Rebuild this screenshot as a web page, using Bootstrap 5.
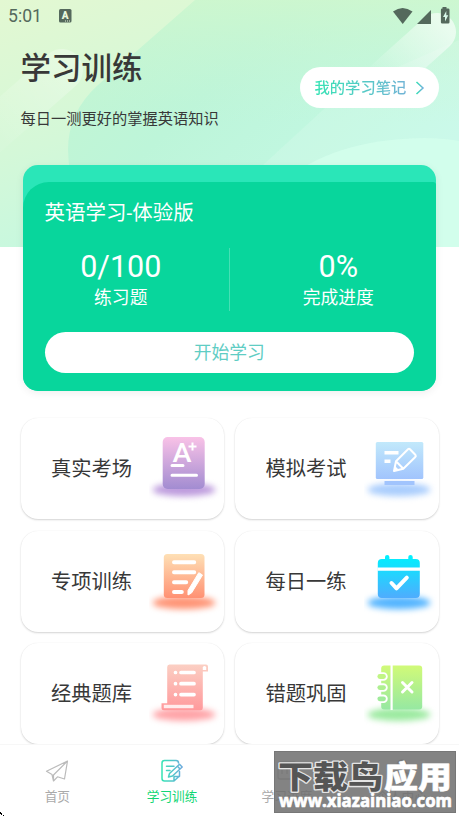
<!DOCTYPE html>
<html lang="zh-CN">
<head>
  <meta charset="UTF-8" />
  <meta name="viewport" content="width=device-width, initial-scale=1" />
  <title>学习训练</title>
  <link href="https://cdn.jsdelivr.net/npm/bootstrap@5.3.3/dist/css/bootstrap.min.css" rel="stylesheet" />
  <style>
    body {
      font-family: Roboto, "Noto Sans CJK SC", sans-serif;
      color: #383838;
      background: #fff;
      overflow: hidden;
    }
    svg { display: block; flex-shrink: 0; }
    .screen { width: 459px; height: 816px; }
    .hero-bg { top: 0; left: 0; z-index: -1; }
    .status-bar { height: 32px; padding: 0 9px 0 8px; color: #54695c; font-size: 17.6px; }
    .page-head { height: 132px; padding: 0 20.5px; }
    .page-title { font-size: 30.5px; line-height: 40px; font-weight: 500; margin: 17px 0 18px; }
    .page-sub { font-size: 15.25px; line-height: 24px; }
    .note-btn {
      width: 139px; height: 41px; margin-top: 35px; padding-left: 15px;
      font-size: 15.3px; font-weight: 500;
    }
    .note-btn span {
      padding-top: 2px;
      background: linear-gradient(90deg, #35e3b4, #72b4d6);
      -webkit-background-clip: text;
      color: transparent;
    }
    .study {
      height: 226px; margin: .5px 23px 0; padding-top: 17.5px;
      border-radius: 15px; background: #2ae6b8;
      box-shadow: 0 2px 9px rgba(0, 0, 0, .07);
      overflow: hidden;
    }
    .study-in {
      height: 209px; padding: 17px 21.5px 0;
      border-radius: 26px 3px 0 0; background: #08d69c;
    }
    .study-name { font-size: 20.5px; line-height: 28px; }
    .stats { height: 61px; margin-top: 21px; }
    .stats .col + .col { border-left: 1px solid rgba(255, 255, 255, .25); }
    .stats .col:first-child { padding-right: 32px; }
    .stats .col:last-child { padding-left: 32px; }
    .stat-num { font-size: 30.5px; line-height: 37px; }
    .stat-label { font-size: 17.8px; line-height: 26px; }
    .start-btn { height: 41px; margin: 23px .5px 0 0; padding-top: 2px; font-size: 17.8px; color: #5fcdc4; }
    .tiles { margin: 27.5px 20.5px 0; row-gap: 11.5px; column-gap: 11px; display: grid; grid-template-columns: 1fr 1fr; }
    .tile {
      height: 101px; padding: 0 1px 0 30.5px; border-radius: 17px; background: #fff;
      font-size: 20.3px;
      box-shadow: 0 1px 2px rgba(0, 0, 0, .17), 0 0 1px rgba(0, 0, 0, .08);
    }
    .tile span { padding-top: 2px; }
    .tab-bar { top: 744px; left: 0; height: 72px; border-top: 1px solid #f7f7f7; background: #fff; }
    .tab-item { font-size: 12.7px; line-height: 18px; color: #aaa; padding-top: 14px; }
    .tab-item.on { color: #14d675; }
    .tab-item svg { margin-bottom: 5px; }
    .stamp {
      top: 751px; left: 274px; width: 182px; height: 62px;
      background: rgba(111, 111, 111, .86); border: 1px solid #777;
    }
    .pointer { left: 0; top: 812px; }
  </style>
</head>
<body>
<div class="screen position-relative overflow-hidden">

  <svg class="hero-bg position-absolute" width="459" height="247" viewBox="0 0 459 247">
    <defs>
      <linearGradient id="base" x1="0" y1="0" x2="1" y2=".55"><stop offset=".2" stop-color="#c3f5d2"/><stop offset=".5" stop-color="#bdf5d9"/><stop offset="1" stop-color="#c4f9e7"/></linearGradient>
      <linearGradient id="topTint" x1="0" y1="0" x2="0" y2="1"><stop offset="0" stop-color="#d0f7cd" stop-opacity=".8"/><stop offset=".5" stop-color="#c4f5d6" stop-opacity="0"/></linearGradient>
      <linearGradient id="leaf" x1="0" y1="0" x2=".25" y2="1"><stop offset="0" stop-color="#e3f8d2"/><stop offset=".6" stop-color="#d4f8d8"/><stop offset="1" stop-color="#c7f8df"/></linearGradient>
      <linearGradient id="ray" gradientUnits="userSpaceOnUse" x1="445" y1="25" x2="375" y2="85"><stop offset="0" stop-color="#fff" stop-opacity=".6"/><stop offset="1" stop-color="#fff" stop-opacity="0"/></linearGradient>
      <linearGradient id="ray2" gradientUnits="userSpaceOnUse" x1="75" y1="55" x2="-10" y2="130"><stop offset="0" stop-color="#fff" stop-opacity=".3"/><stop offset="1" stop-color="#fff" stop-opacity=".05"/></linearGradient>
    </defs>
    <rect width="459" height="247" fill="url(#base)"/>
    <rect width="459" height="247" fill="url(#topTint)"/>
    <path d="M0 0H195L98 85Q68 112 68 150Q69 200 100 247H0Z" fill="url(#leaf)"/>
    <path d="M62 70L-20 142" stroke="url(#ray2)" stroke-width="42" stroke-linecap="round"/>
    <path d="M437 32L340 119" stroke="url(#ray)" stroke-width="38" stroke-linecap="round"/>
    <path d="M325 108L262 166V247H459V40L400 66Z" fill="#fff" opacity=".13"/>
    <path d="M280 185Q330 139 425 138Q443 138 459 141V247H280Z" fill="#d3feec" opacity=".88"/>
  </svg>

  <div class="status-bar d-flex align-items-center">
    <span>5:01</span>
    <svg class="ms-3" width="14" height="14" viewBox="0 0 14 14">
      <rect x="1" width="12.500" height="13.500" rx="1.500" fill="#54695c"/>
      <text x="7.200" y="10" text-anchor="middle" font-size="10" font-weight="900" fill="#e9f8dd">A</text>
      <path d="M7 12h1m1 0h1m1 0h1" stroke="#e9f8dd"/>
    </svg>
    <svg class="ms-auto" width="58" height="18" viewBox="0 0 58 18" fill="#54695c">
      <path d="M1 4.500Q10.500 -2.500 20.500 4.500L10.700 17Z"/>
      <path d="M39 3V17H25Z"/>
      <path d="M50.500 1.500V0h4v1.500h1.700q1.300 0 1.300 1.300v12.400q0 1.300-1.300 1.300h-6q-1.300 0-1.300-1.300V2.800q0-1.300 1.300-1.300Z"/>
      <path d="M54.300 4L51 10h2v4.500L56.300 8.300h-2Z" fill="#d8f8e9"/>
    </svg>
  </div>

  <div class="page-head d-flex justify-content-between">
    <div>
      <h1 class="page-title">学习训练</h1>
      <div class="page-sub">每日一测更好的掌握英语知识</div>
    </div>
    <div class="note-btn d-flex align-items-center bg-white rounded-pill">
      <span>我的学习笔记</span>
      <svg class="ms-2" width="12" height="16" viewBox="0 0 12 16" fill="none">
        <defs><linearGradient id="chev"><stop stop-color="#35dfb4"/><stop offset="1" stop-color="#72b0dc"/></linearGradient></defs>
        <path d="M2.500 2L9 8L2.500 14" stroke="url(#chev)" stroke-width="1.500"/>
      </svg>
    </div>
  </div>

  <div class="study text-white">
    <div class="study-in">
      <div class="study-name">英语学习-体验版</div>
      <div class="stats row g-0 text-center">
        <div class="col">
          <div class="stat-num">0/100</div>
          <div class="stat-label">练习题</div>
        </div>
        <div class="col">
          <div class="stat-num">0%</div>
          <div class="stat-label">完成进度</div>
        </div>
      </div>
      <div class="start-btn d-flex align-items-center justify-content-center bg-white rounded-pill">开始学习</div>
    </div>
  </div>

  <div class="tiles">
    <div class="tile d-flex align-items-center justify-content-between">
      <span>真实考场</span>
      <svg width="74" height="101" viewBox="0 0 74 101">
        <defs>
          <filter id="soft" x="-30%" y="-150%" width="160%" height="400%" color-interpolation-filters="sRGB"><feGaussianBlur stdDeviation="3"/></filter>
          <linearGradient id="g1" x2="0" y2="1"><stop stop-color="#f9c2e7"/><stop offset="1" stop-color="#a28cd1"/></linearGradient>
        </defs>
        <ellipse cx="35" cy="71.700" rx="31.500" ry="6.500" fill="#bd9bdd" filter="url(#soft)"/>
        <rect x="13.700" y="19" width="42" height="52" rx="5" fill="url(#g1)"/>
        <text x="33" y="43.500" text-anchor="middle" font-size="26" font-weight="500" textLength="19" lengthAdjust="spacingAndGlyphs" fill="#fff">A</text>
        <path d="M43.500 28.500m-4 0h8m-4-4v8" stroke="#fff" stroke-width="2"/>
        <path d="M23 47.500H34M23 57.300H47.500" stroke="#fff" stroke-width="3" stroke-linecap="round"/>
      </svg>
    </div>
    <div class="tile d-flex align-items-center justify-content-between">
      <span>模拟考试</span>
      <svg width="74" height="101" viewBox="0 0 74 101">
        <defs><linearGradient id="g2" x2="0" y2="1"><stop stop-color="#c2e9fb"/><stop offset="1" stop-color="#a1c4fd"/></linearGradient></defs>
        <ellipse cx="35" cy="71.700" rx="31.500" ry="6.500" fill="#a9cdfd" filter="url(#soft)"/>
        <rect x="11.800" y="24" width="47.500" height="37" rx="1.500" fill="url(#g2)"/>
        <rect x="20.500" y="63" width="30" height="4" fill="#a1c4fd"/>
        <path d="M20.500 34.700H34.500M20.500 43.200H26.500" stroke="#fff" stroke-width="3.600"/>
        <path d="M30 53L32 43.300L44 31.200Q45 30.200 46 31.200L51.500 37Q52.300 38 51.300 39L39.300 50.800ZM32 43.300L39.300 50.800" fill="none" stroke="#fff" stroke-width="2" stroke-linejoin="round"/>
        <path d="M30 53l1-5 4 4Z" fill="#fff"/>
      </svg>
    </div>
    <div class="tile d-flex align-items-center justify-content-between">
      <span>专项训练</span>
      <svg width="74" height="101" viewBox="0 0 74 101">
        <defs><linearGradient id="g3" x2="0" y2="1"><stop stop-color="#fee0b5"/><stop offset="1" stop-color="#ff9173"/></linearGradient></defs>
        <ellipse cx="35" cy="71.700" rx="31.500" ry="6.500" fill="#ff9475" filter="url(#soft)"/>
        <rect x="14.800" y="23" width="40.700" height="44" rx="3.500" fill="url(#g3)"/>
        <path d="M25 31.300H45.200M25 41.300H45.200M25 51.300H37.200M25 61H32.800" stroke="#fff" stroke-width="4" stroke-linecap="round"/>
        <path d="M49.800 41.700L53.500 44L42.500 62L39 64L39 59.500Z" fill="#fff" stroke="#fff" stroke-linejoin="round"/>
      </svg>
    </div>
    <div class="tile d-flex align-items-center justify-content-between">
      <span>每日一练</span>
      <svg width="74" height="101" viewBox="0 0 74 101">
        <defs><linearGradient id="g4" gradientUnits="userSpaceOnUse" x1="0" y1="24" x2="0" y2="67"><stop stop-color="#00f2fe"/><stop offset="1" stop-color="#4facfe"/></linearGradient></defs>
        <ellipse cx="35" cy="71.700" rx="31.500" ry="6.500" fill="#52b4ff" filter="url(#soft)"/>
        <rect x="13.800" y="28" width="42" height="39" rx="4" fill="url(#g4)"/>
        <path d="M21 30V26q0-2 2.200-2t2.200 2v4ZM44.300 30V26q0-2 2.200-2t2.200 2v4Z" fill="url(#g4)"/>
        <path d="M13.500 38.100H56.100" stroke="#fff" stroke-width="3.200"/>
        <path d="M27.500 52L32.500 57.300L42.800 46.700" fill="none" stroke="#fff" stroke-width="4" stroke-linecap="round" stroke-linejoin="round"/>
      </svg>
    </div>
    <div class="tile d-flex align-items-center justify-content-between">
      <span>经典题库</span>
      <svg width="74" height="101" viewBox="0 0 74 101">
        <defs><linearGradient id="g5" x2="0" y2="1"><stop stop-color="#fbcfc3"/><stop offset="1" stop-color="#ff999c"/></linearGradient></defs>
        <ellipse cx="35" cy="71.500" rx="31.500" ry="6.500" fill="#ffa3a7" filter="url(#soft)"/>
        <path d="M20.500 21.500H57q2 0 2 2V28.500H53.800V65q0 2.200-2.200 2.200H15q-2.500 0-2.500-2.500V60.200H18.200V24q0-2.500 2.300-2.500Z" fill="url(#g5)"/>
        <path d="M53.800 24.500q0-1.500 1.700-1.500t1.700 1.500V27H53.800Z" fill="#fff"/>
        <path d="M14.800 61.800H44.500V65.200H14.800Z" fill="#fff" opacity=".8"/>
        <path d="M26.500 29.500h.01M26.500 40.700h.01M26.500 51.600h.01M32 29.500H45M32 40.700H45M32 51.600H45" stroke="#fff" stroke-width="3.700" stroke-linecap="round"/>
      </svg>
    </div>
    <div class="tile d-flex align-items-center justify-content-between">
      <span>错题巩固</span>
      <svg width="74" height="101" viewBox="0 0 74 101">
        <defs><linearGradient id="g6" x2="0" y2="1"><stop stop-color="#d1fa78"/><stop offset="1" stop-color="#96e8a2"/></linearGradient></defs>
        <ellipse cx="35" cy="71.500" rx="31.500" ry="6.500" fill="#9bea9f" filter="url(#soft)"/>
        <rect x="17.200" y="22.500" width="41" height="44" rx="3" fill="url(#g6)"/>
        <path d="M27.600 22V67" stroke="#fff" stroke-width="2.200"/>
        <g fill="none" stroke-linecap="round">
          <path d="M16 33.500H19.500M16 44.600H19.500M16 55.800H19.500" stroke="#fff" stroke-width="8.500"/>
          <path d="M15.800 33.500H19.500" stroke="#c0f584" stroke-width="4.800"/>
          <path d="M15.800 44.600H19.500" stroke="#aeef90" stroke-width="4.800"/>
          <path d="M15.800 55.800H19.500" stroke="#9feb9a" stroke-width="4.800"/>
        </g>
        <path d="M38.500 39.500L48 49M48 39.500L38.500 49" stroke="#fff" stroke-width="3" stroke-linecap="round"/>
      </svg>
    </div>
  </div>

  <div class="tab-bar position-absolute w-100 d-flex">
    <div class="tab-item flex-fill w-25 d-flex flex-column align-items-center">
      <svg width="24" height="24" viewBox="0 0 24 24" fill="none" stroke="#bbb" stroke-width="1.200" stroke-linejoin="round">
        <path d="M22.500 2L1.500 12.300L7 15.500L8.500 22L12.500 17.800L19.500 20ZM22.500 2L8.500 16V22"/>
      </svg>
      <span>首页</span>
    </div>
    <div class="tab-item on flex-fill w-25 d-flex flex-column align-items-center">
      <svg width="24" height="24" viewBox="0 0 24 24" fill="none" stroke="url(#tabOn)" stroke-width="1.500" stroke-linejoin="round" stroke-linecap="round">
        <defs><linearGradient id="tabOn" gradientUnits="userSpaceOnUse" x1="2" y1="0" x2="23" y2="0"><stop stop-color="#35e3b4"/><stop offset="1" stop-color="#70a9df"/></linearGradient></defs>
        <path d="M18.500 4Q18.500 1.500 16 1.500H4.500Q2 1.500 2 4V19.500Q2 22 4.500 22H14L19.500 17V12.500M14 22V17.500H19.500"/>
        <path d="M6.500 7.200H14M6.500 11.500H10M8.500 18L9.500 14.500L19.500 5.300L22.200 8L12.500 17ZM17.500 7.300L20 10"/>
      </svg>
      <span>学习训练</span>
    </div>
    <div class="tab-item flex-fill w-25 d-flex flex-column align-items-center">
      <svg width="24" height="24" viewBox="0 0 24 24" fill="none" stroke="#bbb" stroke-width="1.300">
        <rect x="3" y="3" width="18" height="17" rx="2"/><path d="M7 15V11M12 15V8M17 15V10"/>
      </svg>
      <span>学习进度</span>
    </div>
    <div class="tab-item flex-fill w-25 d-flex flex-column align-items-center">
      <svg width="24" height="24" viewBox="0 0 24 24" fill="none" stroke="#bbb" stroke-width="1.300">
        <circle cx="12" cy="6" r="5"/><path d="M3 22Q3 13 12 13T21 22Z"/>
      </svg>
      <span>个人中心</span>
    </div>
  </div>

  <svg class="stamp position-absolute" viewBox="0 0 180 60" font-family="'Noto Sans CJK SC', sans-serif" font-weight="900" paint-order="stroke" stroke-linejoin="round">
    <g font-size="31" stroke-width="2.600">
      <text x="3" y="35.500" textLength="105" lengthAdjust="spacingAndGlyphs" fill="#555" stroke="#e4e4e4">下载鸟</text>
      <text x="109" y="35.500" textLength="68" lengthAdjust="spacingAndGlyphs" fill="#fff" stroke="#fff" stroke-width=".5">应用</text>
    </g>
    <text x="4" y="55" font-family="'Open Sans', sans-serif" font-size="17" font-weight="700" textLength="173" lengthAdjust="spacingAndGlyphs" fill="#fff" stroke="#fff" stroke-width=".7">www.xiazainiao.com</text>
  </svg>

  <svg class="pointer position-absolute" width="5" height="4" viewBox="0 0 5 4"><path d="M0 0H1V1H2V3H4V4H3V3H1V2H0Z" fill="#000"/></svg>
</div>
<script src="https://cdn.jsdelivr.net/npm/bootstrap@5.3.3/dist/js/bootstrap.bundle.min.js"></script>
</body>
</html>
